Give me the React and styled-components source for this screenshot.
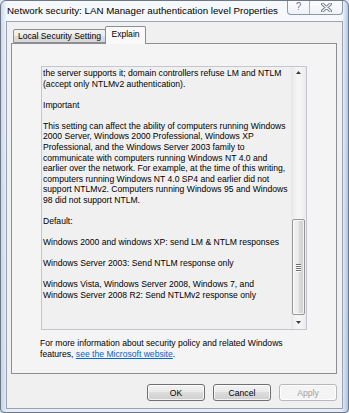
import React from "react";
import styled, { createGlobalStyle } from "styled-components";

const Global = createGlobalStyle`
  html, body { margin: 0; padding: 0; background: #dfe7f1; }
  body { font-family: "Liberation Sans", Arial, sans-serif; }
  * { box-sizing: border-box; }
`;

const Window = styled.div`
  width: 349px;
  height: 413px;
  border: 1px solid #6d7785;
  border-radius: 6px 6px 4px 4px;
  background:
    linear-gradient(90deg, rgba(150,180,220,0.45) 0px, rgba(255,255,255,0) 6px, rgba(255,255,255,0) 341px, rgba(120,160,215,0.55) 347px),
    linear-gradient(180deg, #f6f9fc 0%, #eef3f9 40%, #e6edf6 100%);
  display: flex;
  flex-direction: column;
  overflow: hidden;
`;

const TitleBar = styled.div`
  height: 20px;
  display: flex;
  align-items: flex-start;
  padding: 0 5px 0 6px;
`;

const Title = styled.div`
  flex: 1;
  font-size: 9.75px;
  line-height: 20px;
  color: #000;
  white-space: nowrap;
  text-shadow: 0 0 6px rgba(255,255,255,0.9);
`;

const Caption = styled.div`
  display: flex;
  margin-top: -1px;
  border: 1px solid #8d97a5;
  border-top: none;
  border-radius: 0 0 4px 4px;
  overflow: hidden;
  background: linear-gradient(180deg, rgba(255,255,255,0.7), rgba(235,240,247,0.7));
`;

const CapBtn = styled.div`
  width: ${(p) => p.$w}px;
  height: 14px;
  display: flex;
  align-items: center;
  justify-content: center;
  border-left: ${(p) => (p.$first ? "none" : "1px solid #a5aebb")};
  color: #6f7a88;
  font-size: 10px;
  line-height: 14px;
`;

const Client = styled.div`
  flex: 1;
  margin: 0 5px 3px 5px;
  border: 1px solid #9aa3af;
  background: #f0f0f0;
  display: flex;
  flex-direction: column;
  padding: 4px 5px 7px 4px;
`;

const TabStrip = styled.div`
  display: flex;
  align-items: flex-end;
  height: 17px;
  padding-left: 2px;
  position: relative;
  z-index: 1;
`;

const Tab = styled.div`
  height: ${(p) => (p.$active ? 18 : 14)}px;
  margin-bottom: ${(p) => (p.$active ? -1 : 0)}px;
  margin-left: ${(p) => (p.$active ? -1 : 0)}px;
  width: ${(p) => p.$w}px;
  border: 1px solid #8c8e94;
  border-bottom: ${(p) => (p.$active ? "none" : "1px solid #8c8e94")};
  border-radius: 2px 2px 0 0;
  background: ${(p) =>
    p.$active
      ? "#f9f9f9"
      : "linear-gradient(180deg, #f3f3f3 0%, #ebebeb 50%, #dedede 51%, #d6d6d6 100%)"};
  font-size: 8.6px;
  color: #000;
  display: flex;
  align-items: center;
  justify-content: center;
  padding-bottom: ${(p) => (p.$active ? 3 : 0)}px;
  white-space: nowrap;
`;

const Panel = styled.div`
  height: 331px;
  border: 1px solid #8c8e94;
  background: #f4f4f4;
  padding: 22px 28px 0 29px;
  display: flex;
  flex-direction: column;
`;

const TextBox = styled.div`
  width: 266px;
  height: 264px;
  border: 1px solid #c3c6cc;
  background: #f0f0f0;
  display: flex;
`;

const TextArea = styled.div`
  flex: 1;
  padding: 1px 0 0 1px;
  overflow: hidden;
`;

const Line = styled.div`
  height: 10.57px;
  line-height: 10.57px;
  font-size: 8.6px;
  color: #000;
  white-space: nowrap;
`;

const ScrollBar = styled.div`
  width: 15px;
  display: flex;
  flex-direction: column;
  align-items: center;
  background: linear-gradient(90deg, #e8e8e8, #f5f5f5 40%, #f5f5f5 60%, #ebebeb);
`;

const ArrowBtn = styled.div`
  width: 15px;
  height: ${(p) => p.$h}px;
  display: flex;
  align-items: center;
  justify-content: center;
`;

const Track = styled.div`
  flex: 1;
  width: 100%;
  display: flex;
  flex-direction: column;
  align-items: center;
  justify-content: flex-end;
`;

const Thumb = styled.div`
  width: 13px;
  height: 96px;
  border: 1px solid #979797;
  border-radius: 2px;
  background: linear-gradient(90deg, #f2f2f2 0%, #e9e9e9 50%, #d9d9d9 51%, #d2d2d2 100%);
  display: flex;
  align-items: center;
  justify-content: center;
  box-shadow: inset 0 0 0 1px rgba(255,255,255,0.7);
`;

const Grip = styled.div`
  display: flex;
  flex-direction: column;
  gap: 1px;
`;

const GripLine = styled.div`
  width: 5px;
  height: 1px;
  background: #6e6e6e;
  box-shadow: 0 1px 0 #fff;
`;

const Footer = styled.div`
  margin-top: 8px;
  margin-left: -1px;
  font-size: 8.6px;
  line-height: 10.5px;
  color: #000;
  white-space: nowrap;
`;

const Link = styled.a`
  color: #0066cc;
  text-decoration: underline;
`;

const ButtonRow = styled.div`
  display: flex;
  justify-content: flex-end;
  gap: 8px;
  margin-top: 10px;
`;

const Button = styled.div`
  width: 58px;
  height: 17px;
  border: 1px solid ${(p) => (p.$disabled ? "#b5b9bd" : "#707070")};
  border-radius: 3px;
  background: ${(p) =>
    p.$disabled
      ? "#f4f4f4"
      : "linear-gradient(180deg, #f2f2f2 0%, #ebebeb 45%, #dddddd 50%, #cfcfcf 100%)"};
  box-shadow: inset 0 0 0 1px rgba(255,255,255,0.75);
  font-size: 8.6px;
  color: ${(p) => (p.$disabled ? "#a0a0a0" : "#000")};
  display: flex;
  align-items: center;
  justify-content: center;
`;

const lines = [
  "the server supports it; domain controllers refuse LM and NTLM",
  "(accept only NTLMv2 authentication).",
  "",
  "Important",
  "",
  "This setting can affect the ability of computers running Windows",
  "2000 Server, Windows 2000 Professional, Windows XP",
  "Professional, and the Windows Server 2003 family to",
  "communicate with computers running Windows NT 4.0 and",
  "earlier over the network. For example, at the time of this writing,",
  "computers running Windows NT 4.0 SP4 and earlier did not",
  "support NTLMv2. Computers running Windows 95 and Windows",
  "98 did not support NTLM.",
  "",
  "Default:",
  "",
  "Windows 2000 and windows XP: send LM & NTLM responses",
  "",
  "Windows Server 2003: Send NTLM response only",
  "",
  "Windows Vista, Windows Server 2008, Windows 7, and",
  "Windows Server 2008 R2: Send NTLMv2 response only",
];

const CloseGlyph = () => (
  <svg width="11" height="9" viewBox="0 0 11 9">
    <path d="M1.5 1 L9.5 8 M9.5 1 L1.5 8" stroke="#6f7a88" strokeWidth="3" strokeLinecap="round" />
    <path d="M1.5 1 L9.5 8 M9.5 1 L1.5 8" stroke="#f4f6f9" strokeWidth="1.2" strokeLinecap="round" />
  </svg>
);

const UpArrow = () => (
  <svg width="5" height="3" viewBox="0 0 5 3">
    <path d="M0 3 L2.5 0 L5 3 Z" fill="#3c3c3c" />
  </svg>
);

const DownArrow = () => (
  <svg width="5" height="3" viewBox="0 0 5 3">
    <path d="M0 0 L5 0 L2.5 3 Z" fill="#3c3c3c" />
  </svg>
);

export default function App() {
  return (
    <>
      <Global />
      <Window>
        <TitleBar>
          <Title>Network security: LAN Manager authentication level Properties</Title>
          <Caption>
            <CapBtn $w={21} $first>?</CapBtn>
            <CapBtn $w={33}>
              <CloseGlyph />
            </CapBtn>
          </Caption>
        </TitleBar>
        <Client>
          <TabStrip>
            <Tab $w={93}>Local Security Setting</Tab>
            <Tab $w={41} $active>Explain</Tab>
          </TabStrip>
          <Panel>
            <TextBox>
              <TextArea>
                {lines.map((l, i) => (
                  <Line key={i}>{l || "\u00a0"}</Line>
                ))}
              </TextArea>
              <ScrollBar>
                <ArrowBtn $h={11}>
                  <UpArrow />
                </ArrowBtn>
                <Track>
                  <Thumb>
                    <Grip>
                      <GripLine />
                      <GripLine />
                      <GripLine />
                      <GripLine />
                    </Grip>
                  </Thumb>
                </Track>
                <ArrowBtn $h={14}>
                  <DownArrow />
                </ArrowBtn>
              </ScrollBar>
            </TextBox>
            <Footer>
              For more information about security policy and related Windows
              <br />
              features, <Link>see the Microsoft website</Link>.
            </Footer>
          </Panel>
          <ButtonRow>
            <Button>OK</Button>
            <Button>Cancel</Button>
            <Button $disabled>Apply</Button>
          </ButtonRow>
        </Client>
      </Window>
    </>
  );
}
